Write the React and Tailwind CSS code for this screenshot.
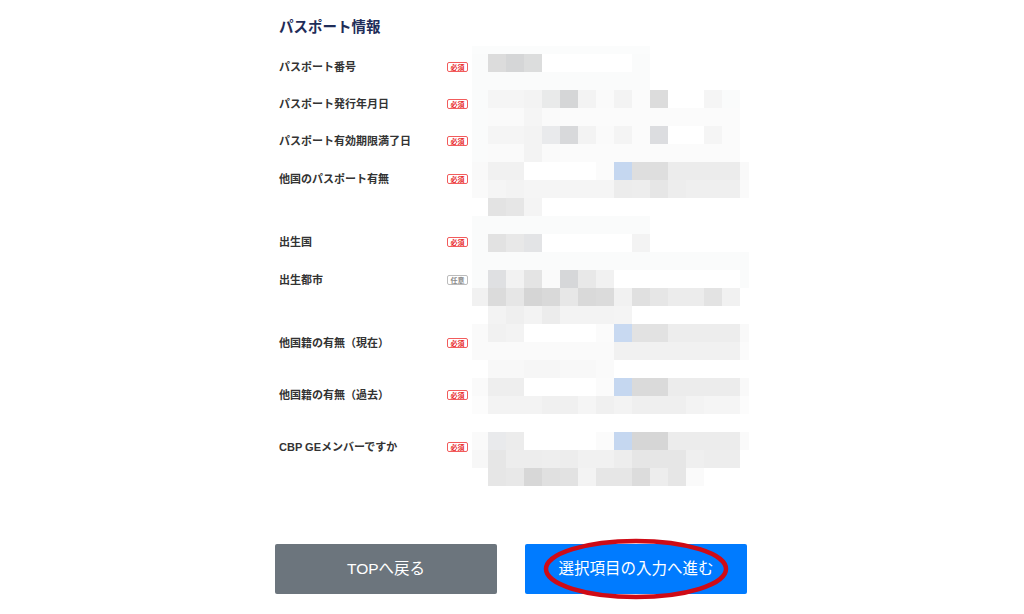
const F = 'fafbfb';
const B = 'fbfbfb';

// mosaic cells, 16 columns per row, 0 = white
const ROWS = [
  [F, 'dcdcdc', 'd5d6d7', 'dcdddd', 0, 0, 0, 0, 0, F, 0, 0, 0, 0, 0, 0],
  [F, F, F, F, F, F, F, F, F, F, 0, 0, 0, 0, 0, 0],
  [F, 'f5f5f5', 'f5f5f5', 'f3f3f3', 'e9eaea', 'd5d6d7', 'f3f3f3', 'fafafa', 'f3f3f3', B, 'dcdcdc', 0, 0, 'f5f5f5', F, 0],
  [F, 'fafafa', 'fafafa', 'f5f5f5', 'fafafa', B, B, B, B, B, B, B, B, B, B, 0],
  [F, 'f5f5f5', 'f5f5f5', 'f3f3f3', 'e9eaec', 'd8d9db', 'f3f3f3', 'fafafa', 'f4f4f4', B, 'dcdde0', 0, 0, 'f5f5f5', B, 0],
  [F, 'fafafa', 'fafafa', 'f3f3f3', 'fafafa', B, B, B, B, B, B, B, B, B, B, 0],
  ['f9f9f9', 'f1f1f1', 'f1f1f1', 0, 0, 0, 0, B, 'c5d7f0', 'dedede', 'dedede', 'ececec', 'ececec', 'ececec', 'ececec', 'f9f9f9'],
  ['fafafa', 'f5f5f5', 'f3f3f3', 'f5f5f5', 'f5f5f5', 'f5f5f5', 'f5f5f5', 'f5f5f5', 'ececec', 'ededed', 'e6e6e6', 'ededed', 'efefef', 'efefef', 'efefef', 'fafafa'],
  [0, 'e3e3e3', 'e6e6e6', 'f4f4f4', 0, 0, 0, 0, 0, 0, 0, 0, 0, 0, 0, 0],
  [F, F, F, F, F, F, F, F, F, F, 0, 0, 0, 0, 0, 0],
  [F, 'e2e2e2', 'e8e8e8', 'e3e4e6', 0, 0, 0, 0, 0, 'f3f3f3', 0, 0, 0, 0, 0, 0],
  [F, F, F, F, F, F, F, F, F, F, F, F, F, F, F, F],
  [F, 'dfe0e2', 'f2f2f2', 'e4e4e4', 'fafafa', 'd6d7d9', 'e8e8e8', 'f1f1f1', 0, 0, 0, 0, 0, 0, 0, F],
  ['f1f1f1', 'dbdbdb', 'e6e6e6', 'd5d5d5', 'd9d9d9', 'e7e7e7', 'd9d9d9', 'dbdbdb', 'f1f1f1', 'e0e0e0', 'e6e6e6', 'ececec', 'ececec', 'e3e3e3', 'f1f1f1', 0],
  [0, 'f3f3f3', 'efefef', 'f3f3f3', 'ececec', 'f3f3f3', 'f3f3f3', 'f3f3f3', 'f4f4f4', 0, 0, 0, 0, 0, 0, 0],
  ['fafafa', 'f1f1f1', 'f3f3f3', 0, 0, 0, 0, B, 'c8d9f1', 'e2e2e2', 'e2e2e2', 'ededed', 'ededed', 'ededed', 'ededed', 'f9f9f9'],
  ['fafafa', 'fafafa', 'fafafa', 'fafafa', 'fafafa', 'fafafa', 'fafafa', 'fafafa', 'f1f1f1', 'f1f1f1', 'f1f1f1', 'f1f1f1', 'f1f1f1', 'f1f1f1', 'f1f1f1', B],
  [0, 'f8f8f8', 'f8f8f8', 'f6f6f6', 'f6f6f6', 'f8f8f8', 'f8f8f8', 'fafafa', 0, 0, 0, 0, 0, 0, 0, 0],
  ['fafafa', 'eeeeee', 'eeeeee', 0, 0, 0, 0, B, 'c5d7f0', 'dadada', 'dadada', 'ececec', 'ececec', 'ececec', 'ececec', 'f9f9f9'],
  ['fcfcfc', 'f3f3f3', 'f3f3f3', 'f3f3f3', 'f0f0f0', 'f0f0f0', 'f5f5f5', 'f0f0f0', 'f3f3f3', 'efefef', 'efefef', 'efefef', 'f3f3f3', 'f5f5f5', 'f5f5f5', 'fcfcfc'],
  [0, 0, 0, 0, 0, 0, 0, 0, 0, 0, 0, 0, 0, 0, 0, 0],
  ['fafafa', 'e9eaec', 'ececec', 0, 0, 0, 0, B, 'c5d7f0', 'd6d6d6', 'd6d6d6', 'ececec', 'ececec', 'ececec', 'ececec', 'fafafa'],
  ['f7f7f7', 'e6e6e6', 'ededed', 'ededed', 'eeeeee', 'ededed', 'f1f1f1', 'f1f1f1', 'ededed', 'e6e6e6', 'e6e6e6', 'e6e6e6', 'efefef', 'ededed', 'ededed', 0],
  [0, 'e6e6e6', 'e8e8e8', 'd7d7d7', 'e0e0e0', 'e2e2e2', 'f3f3f3', 'e6e6e6', 'e6e6e6', 'dcdcdc', 'ededed', 'e6e6e6', 'fafafa', 0, 0, 0],
];

const FIELDS = [
  { label: 'パスポート番号', required: true, h: 'h-[37px]' },
  { label: 'パスポート発行年月日', required: true, h: 'h-[37px]' },
  { label: 'パスポート有効期限満了日', required: true, h: 'h-[38px]' },
  { label: '他国のパスポート有無', required: true, h: 'h-[63px]' },
  { label: '出生国', required: true, h: 'h-[38px]' },
  { label: '出生都市', required: false, h: 'h-[63px]' },
  { label: '他国籍の有無（現在）', required: true, h: 'h-[52px]' },
  { label: '他国籍の有無（過去）', required: true, h: 'h-[52px]' },
  { label: 'CBP GEメンバーですか', required: true, h: 'h-4' },
];

const colX = (i) => (i === 0 ? 2 : 18 * i);
const colW = (i) => (i === 0 ? 16 : i === 15 ? 9 : 18);

function Mosaic() {
  return (
    <svg width="279" height="455" viewBox="0 0 279 455" shapeRendering="crispEdges" className="block shrink-0">
      {/* faint strip above the first row */}
      <rect x="2" y="9" width="178" height="8" fill="#fbfcfc" />
      {ROWS.map((row, r) =>
        row.map((c, i) =>
          c ? <rect key={`${r}-${i}`} x={colX(i)} y={17 + 18 * r} width={colW(i)} height="18" fill={`#${c}`} /> : null
        )
      )}
    </svg>
  );
}

function Badge({ required }) {
  return required ? (
    <span className="w-[21px] h-[10px] flex items-center justify-center border border-[#f25c5c] rounded-[2px] text-[#e8282b] text-[7px] leading-none font-bold bg-white">
      必須
    </span>
  ) : (
    <span className="w-[21px] h-[10px] flex items-center justify-center border border-[#bcbcbc] rounded-[2px] text-[#8a8a8a] text-[7px] leading-none font-bold bg-white">
      任意
    </span>
  );
}

export default function App() {
  return (
    <div
      className="min-h-screen bg-white"
      style={{ fontFamily: '"Liberation Sans", "Noto Sans CJK JP", sans-serif' }}
    >
      <div className="w-[474px] mx-auto">
        {/* Title */}
        <h2 className="pt-[17px] pl-1 text-[14.5px] leading-5 font-bold text-[#1f2d58]">パスポート情報</h2>

        {/* Fields */}
        <div className="flex">
          <div className="w-[195px] shrink-0 pl-1 pr-[2px] pt-[22px]">
            {FIELDS.map((f) => (
              <div key={f.label} className={f.h}>
                <div className="flex items-center h-4">
                  <span className="flex-1 text-[11px] leading-4 font-bold text-[#333333]">{f.label}</span>
                  <Badge required={f.required} />
                </div>
              </div>
            ))}
          </div>
          <Mosaic />
        </div>

        {/* Buttons */}
        <div className="flex gap-[28px] mt-[52px]">
          <button className="w-[222px] h-[50px] bg-[#6c757d] rounded-[2px] text-white text-[15.5px]">
            TOPへ戻る
          </button>
          <div className="relative">
            <button className="w-[222px] h-[50px] bg-[#007bff] rounded-[2px] text-white text-[15.5px]">
              選択項目の入力へ進む
            </button>
            {/* red annotation circle */}
            <svg
              className="absolute left-[17px] top-[-6px] pointer-events-none overflow-visible"
              width="188"
              height="62"
              viewBox="0 0 188 62"
            >
              <ellipse cx="94" cy="31" rx="90" ry="28" fill="none" stroke="#cf0b16" strokeWidth="4.5" />
            </svg>
          </div>
        </div>
      </div>
    </div>
  );
}
